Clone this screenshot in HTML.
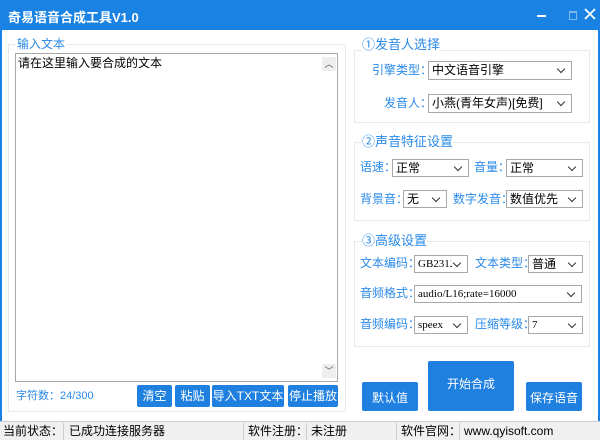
<!DOCTYPE html>
<html><head><meta charset="utf-8"><style>
*{box-sizing:border-box;margin:0;padding:0}
body{width:600px;height:440px;overflow:hidden;background:#1a82e2;font-family:"Liberation Sans","Noto Sans CJK SC",sans-serif;font-size:12px;position:relative}
.a{position:absolute;white-space:nowrap}
.win{left:2px;top:30px;width:596px;height:408px;background:#fff}
.title{left:8px;top:7px;color:#fff;font-weight:bold;font-size:13px}
.grp{border:1px solid #e8e8e8;position:absolute}
.gt{position:absolute;color:#2a8ae8;font-size:12px;background:#fff;line-height:14px;white-space:nowrap}
.lbl{position:absolute;color:#2a8ae8;font-size:12px;line-height:18px;white-space:nowrap}
.sel{position:absolute;border:1px solid #a8a8a8;background:#fff;color:#000;font-size:12px;line-height:16px;padding-left:3px;white-space:nowrap;overflow:hidden}
.sel::after{content:"";position:absolute;right:7px;top:4px;width:5px;height:5px;border-right:1.3px solid #333;border-bottom:1.3px solid #333;transform:rotate(45deg);background:#fff;box-shadow:0 0 0 3px #fff}
.mono{font-family:"Liberation Serif",serif;font-size:11px}
.btn{position:absolute;background:#1f80e0;color:#fff;border-radius:2px;text-align:center;font-size:12px;white-space:nowrap}
.sb{left:0;top:421px;width:600px;height:19px;background:#f0f0f0;border-top:1px solid #ccc}
.sc{position:absolute;top:1px;height:17px;line-height:17px;border-right:1px solid #ccc;padding-left:4px;color:#000;font-size:12px;white-space:nowrap;overflow:hidden}
</style></head><body>
<div class="a title">奇易语音合成工具V1.0</div>
<div class="a" style="left:537px;top:15px;width:9px;height:2px;background:#fff"></div>
<div class="a" style="left:569px;top:11px;width:8px;height:9px;border:1px solid #7fb8ee;border-top-width:2px"></div>
<div class="a" style="left:583px;top:7px;width:14px;height:14px">
<svg width="14" height="14"><path d="M2 2L12 12M12 2L2 12" stroke="#fff" stroke-width="1.8"/></svg></div>
<div class="a win"></div>
<div class="grp" style="left:8px;top:44px;width:338px;height:368px"></div>
<div class="gt" style="left:16px;top:37px;padding:0 1px">输入文本</div>
<div class="a" style="left:15px;top:53px;width:323px;height:329px;border:1px solid #a8a8a8;background:#fff"></div>
<div class="a" style="left:18px;top:54px;font-size:12px">请在这里输入要合成的文本</div>
<div class="a" style="left:322px;top:57px;width:14px;height:14px;background:#eee;color:#555;font-size:9px;text-align:center;line-height:14px">︿</div>
<div class="a" style="left:322px;top:364px;width:14px;height:14px;background:#eee;color:#555;font-size:9px;text-align:center;line-height:14px">﹀</div>
<div class="lbl" style="left:16px;top:387px;font-size:11px">字符数：24/300</div>
<div class="btn" style="left:137px;top:385px;width:35px;height:22px;line-height:22px">清空</div>
<div class="btn" style="left:175px;top:385px;width:35px;height:22px;line-height:22px">粘贴</div>
<div class="btn" style="left:212px;top:385px;width:72px;height:22px;line-height:22px">导入TXT文本</div>
<div class="btn" style="left:288px;top:385px;width:50px;height:22px;line-height:22px">停止播放</div>

<div class="grp" style="left:354px;top:50px;width:236px;height:73px"></div>
<div class="gt" style="left:362px;top:37px;font-size:13px;line-height:16px">①发音人选择</div>
<div class="lbl" style="left:372px;top:61px">引擎类型：</div>
<div class="sel" style="left:428px;top:61px;width:144px;height:19px">中文语音引擎</div>
<div class="lbl" style="left:384px;top:94px">发音人：</div>
<div class="sel" style="left:428px;top:94px;width:144px;height:19px">小燕(青年女声)[免费]</div>

<div class="grp" style="left:354px;top:142px;width:236px;height:79px"></div>
<div class="gt" style="left:362px;top:134px;font-size:13px;line-height:16px">②声音特征设置</div>
<div class="lbl" style="left:360px;top:158px">语速：</div>
<div class="sel" style="left:392px;top:159px;width:77px;height:18px">正常</div>
<div class="lbl" style="left:474px;top:158px">音量：</div>
<div class="sel" style="left:506px;top:159px;width:77px;height:18px">正常</div>
<div class="lbl" style="left:360px;top:190px">背景音：</div>
<div class="sel" style="left:403px;top:190px;width:44px;height:18px">无</div>
<div class="lbl" style="left:453px;top:190px">数字发音：</div>
<div class="sel" style="left:506px;top:190px;width:77px;height:18px">数值优先</div>

<div class="grp" style="left:354px;top:241px;width:236px;height:106px"></div>
<div class="gt" style="left:362px;top:233px;font-size:13px;line-height:16px">③高级设置</div>
<div class="lbl" style="left:360px;top:254px">文本编码：</div>
<div class="sel mono" style="left:414px;top:255px;width:54px;height:18px">GB2312</div>
<div class="lbl" style="left:475px;top:254px">文本类型：</div>
<div class="sel" style="left:528px;top:255px;width:55px;height:18px">普通</div>
<div class="lbl" style="left:360px;top:284px">音频格式：</div>
<div class="sel mono" style="left:414px;top:285px;width:168px;height:18px">audio/L16;rate=16000</div>
<div class="lbl" style="left:360px;top:315px">音频编码：</div>
<div class="sel mono" style="left:414px;top:316px;width:54px;height:18px">speex</div>
<div class="lbl" style="left:475px;top:315px">压缩等级：</div>
<div class="sel mono" style="left:528px;top:316px;width:55px;height:18px">7</div>

<div class="btn" style="left:362px;top:382px;width:56px;height:29px;line-height:32px">默认值</div>
<div class="btn" style="left:428px;top:361px;width:86px;height:50px;line-height:46px">开始合成</div>
<div class="btn" style="left:526px;top:382px;width:56px;height:29px;line-height:32px">保存语音</div>

<div class="a sb">
<div class="sc" style="left:0;width:64px;padding-left:3px">当前状态：</div>
<div class="sc" style="left:64px;width:180px;padding-left:5px">已成功连接服务器</div>
<div class="sc" style="left:244px;width:63px">软件注册：</div>
<div class="sc" style="left:307px;width:90px">未注册</div>
<div class="sc" style="left:397px;width:63px">软件官网：</div>
<div class="sc" style="left:460px;width:138px;border:none">www.qyisoft.com</div>
</div>
</body></html>
